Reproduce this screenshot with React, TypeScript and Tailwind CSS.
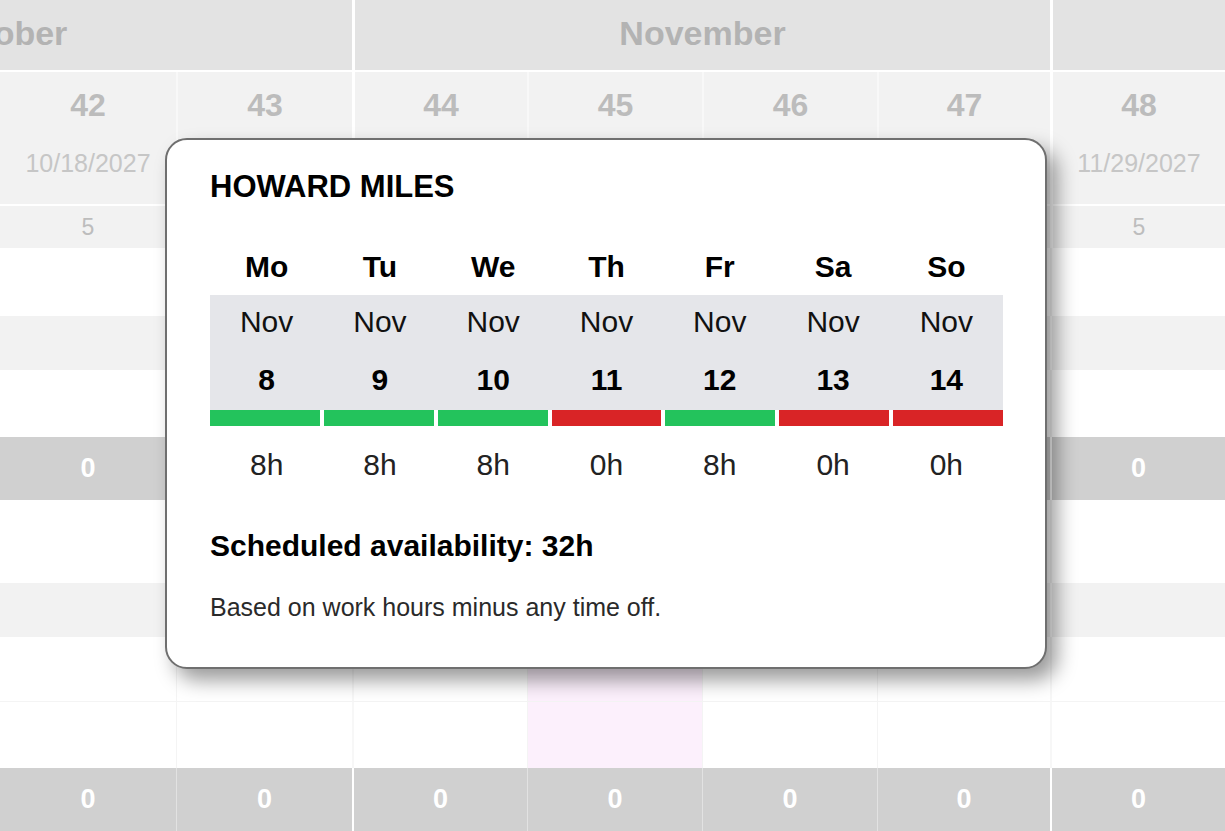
import React from "react";

const COLS = "grid grid-cols-[176px_176px_175px_175px_175px_173px_175px]";
const FONT = { fontFamily: '"Liberation Sans", Arial, Helvetica, sans-serif' };

type RowKind = "white" | "light" | "total";

function DataRow({
  kind,
  h,
  pink = false,
  line = true,
  hidden = [] as number[],
}: {
  kind: RowKind;
  h: string;
  pink?: boolean;
  line?: boolean;
  hidden?: number[];
}) {
  const cells = [0, 1, 2, 3, 4, 5, 6];
  return (
    <div className={`${COLS} ${h}`}>
      {cells.map((i) => {
        const month = i === 2 || i === 6;
        let bg = "bg-white";
        let border = "";
        if (kind === "light") {
          bg = "bg-[#f2f2f2]";
          border = i === 0 ? "" : month ? "border-l-2 border-white" : "border-l border-[#f6f6f6]";
        } else if (kind === "total") {
          bg = "bg-[#d0d0d0]";
          border = i === 0 ? "" : month ? "border-l-2 border-white" : "border-l border-[#e2e2e2]";
        } else {
          bg = pink && i === 3 ? "bg-[#fcf0fc]" : "bg-white";
          border = i === 0 ? "" : month ? "border-l-2 border-[#f7f7f7]" : "border-l border-[#f4f4f4]";
        }
        const bottom = kind === "white" && line ? "border-b border-b-[#f4f4f4]" : "";
        return (
          <div key={i} className={`${bg} ${border} ${bottom} flex items-center justify-center`}>
            {kind === "total" && !hidden.includes(i) && (
              <span className="text-[27px] font-bold leading-none text-white">0</span>
            )}
          </div>
        );
      })}
    </div>
  );
}

const weeks = [
  { n: "42", d: "10/18/2027" },
  { n: "43", d: "" },
  { n: "44", d: "" },
  { n: "45", d: "" },
  { n: "46", d: "" },
  { n: "47", d: "" },
  { n: "48", d: "11/29/2027" },
];

const days = [
  { wd: "Mo", num: "8", ok: true, h: "8h" },
  { wd: "Tu", num: "9", ok: true, h: "8h" },
  { wd: "We", num: "10", ok: true, h: "8h" },
  { wd: "Th", num: "11", ok: false, h: "0h" },
  { wd: "Fr", num: "12", ok: true, h: "8h" },
  { wd: "Sa", num: "13", ok: false, h: "0h" },
  { wd: "So", num: "14", ok: false, h: "0h" },
];

function Popup() {
  return (
    <div className="absolute left-[165px] top-[138px] w-[882px] h-[531px] rounded-[22px] border-2 border-[#6f6f6f] bg-white shadow-[10px_11px_20px_rgba(0,0,0,0.4)] pl-[43px] pt-[31px]">
      <div className="h-[30px] text-[31px] font-bold leading-none text-black flex items-center">HOWARD MILES</div>
      <div className="w-[793px] mt-[51px]">
        <div className="grid grid-cols-7 h-[30px]">
          {days.map((d) => (
            <div key={d.wd} className="flex items-center justify-center text-[30px] font-bold leading-none text-black">
              {d.wd}
            </div>
          ))}
        </div>
        <div className="mt-[13px] bg-[#e5e6ea] h-[115px] pt-[12px]">
          <div className="grid grid-cols-7 h-[30px]">
            {days.map((d) => (
              <div key={d.wd} className="flex items-center justify-center text-[30px] leading-none text-[#111]">
                Nov
              </div>
            ))}
          </div>
          <div className="grid grid-cols-7 h-[30px] mt-[28px]">
            {days.map((d) => (
              <div key={d.wd} className="flex items-center justify-center text-[30px] font-bold leading-none text-black">
                {d.num}
              </div>
            ))}
          </div>
        </div>
        <div className="grid grid-cols-7 gap-[4px] h-[16px]">
          {days.map((d) => (
            <div key={d.wd} className={d.ok ? "bg-[#23c35c]" : "bg-[#d92426]"} />
          ))}
        </div>
        <div className="grid grid-cols-7 h-[30px] mt-[24px]">
          {days.map((d) => (
            <div key={d.wd} className="flex items-center justify-center text-[30px] leading-none text-[#222]">
              {d.h}
            </div>
          ))}
        </div>
      </div>
      <div className="mt-[51px] h-[30px] flex items-center text-[30px] font-bold leading-none text-black">
        Scheduled availability: 32h
      </div>
      <div className="mt-[34px] h-[24px] flex items-center text-[25px] leading-none text-[#2a2a2a]">
        Based on work hours minus any time off.
      </div>
    </div>
  );
}

export default function App() {
  return (
    <div className="relative w-[1225px] h-[831px] overflow-hidden bg-white" style={FONT}>
      {/* Month header */}
      <div className="grid grid-cols-[352px_698px_175px] h-[70px]">
        <div className="bg-[#e3e3e3] flex items-center overflow-hidden pb-[4px]">
          <span className="text-[34px] font-bold leading-none text-[#b3b3b3] -ml-[63px]">October</span>
        </div>
        <div className="bg-[#e3e3e3] border-l-[3px] border-white flex items-center justify-center pb-[4px]">
          <span className="text-[34px] font-bold leading-none text-[#b3b3b3]">November</span>
        </div>
        <div className="bg-[#e3e3e3] border-l-[3px] border-white" />
      </div>
      {/* Week row */}
      <div className={`${COLS} h-[134px] border-t-2 border-white`}>
        {weeks.map((w, i) => (
          <div
            key={w.n}
            className={`bg-[#f2f2f2] flex flex-col items-center ${i === 0 ? "" : i === 2 || i === 6 ? "border-l-[3px] border-white" : "border-l-2 border-[#f8f8f8]"}`}
          >
            <div className="h-[33px] mt-[16px] flex items-center text-[32px] font-bold leading-none text-[#bcbcbc]">{w.n}</div>
            <div className="h-[25px] mt-[30px] flex items-center text-[25px] leading-none text-[#c6c6c6]">{w.d}</div>
          </div>
        ))}
      </div>
      {/* "5" row */}
      <div className={`${COLS} h-[44px] border-t-2 border-white`}>
        {weeks.map((w, i) => (
          <div
            key={w.n}
            className={`bg-[#f2f2f2] flex items-center justify-center ${i === 0 ? "" : i === 2 || i === 6 ? "border-l-[3px] border-white" : "border-l-2 border-[#f8f8f8]"}`}
          >
            <span className="text-[23px] leading-none text-[#bdbdbd]">{i === 0 || i === 6 ? "5" : ""}</span>
          </div>
        ))}
      </div>
      <DataRow kind="white" h="h-[68px]" line={false} />
      <DataRow kind="light" h="h-[54px]" />
      <DataRow kind="white" h="h-[67px]" line={false} />
      <DataRow kind="total" h="h-[63px]" hidden={[1, 2, 3, 4, 5]} />
      <DataRow kind="white" h="h-[83px]" line={false} />
      <DataRow kind="light" h="h-[54px]" />
      <DataRow kind="white" h="h-[65px]" pink />
      <DataRow kind="white" h="h-[66px]" pink line={false} />
      <DataRow kind="total" h="h-[63px]" />
      <Popup />
    </div>
  );
}
